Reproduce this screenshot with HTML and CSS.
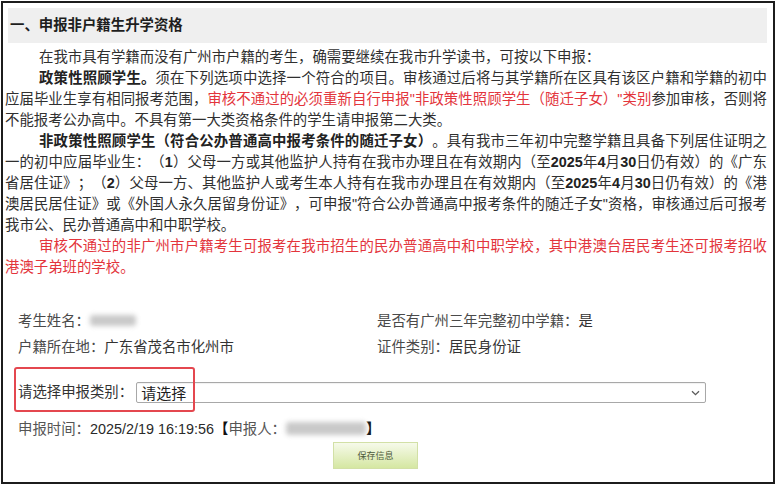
FILE: index.html
```html
<!DOCTYPE html>
<html lang="zh-CN">
<head>
<meta charset="utf-8">
<title>申报非户籍生升学资格</title>
<link rel="stylesheet" href="styles.css">
</head>
<body>
<div class="frame">
  <h2 class="section-title">一、申报非户籍生升学资格</h2>
  <div class="notice">
    <p>在我市具有学籍而没有广州市户籍的考生，确需要继续在我市升学读书，可按以下申报：</p>
    <p><b>政策性照顾学生。</b>须在下列选项中选择一个符合的项目。审核通过后将与其学籍所在区具有该区户籍和学籍的初中应届毕业生享有相同报考范围，<span class="red">审核不通过的必须重新自行申报"非政策性照顾学生（随迁子女）"类别</span>参加审核，否则将不能报考公办高中。不具有第一大类资格条件的学生请申报第二大类。</p>
    <p><b>非政策性照顾学生（符合公办普通高中报考条件的随迁子女）</b>。具有我市三年初中完整学籍且具备下列居住证明之一的初中应届毕业生：（<b class="num">1</b>）父母一方或其他监护人持有在我市办理且在有效期内（至<b class="num">2025</b>年<b class="num">4</b>月<b class="num">30</b>日仍有效）的《广东省居住证》；（<b class="num">2</b>）父母一方、其他监护人或考生本人持有在我市办理且在有效期内（至<b class="num">2025</b>年<b class="num">4</b>月<b class="num">30</b>日仍有效）的《港澳居民居住证》或《外国人永久居留身份证》，可申报"符合公办普通高中报考条件的随迁子女"资格，审核通过后可报考我市公、民办普通高中和中职学校。</p>
    <p class="red">审核不通过的非广州市户籍考生可报考在我市招生的民办普通高中和中职学校，其中港澳台居民考生还可报考招收港澳子弟班的学校。</p>
  </div>

  <div class="info">
    <div class="field">考生姓名：<span class="blur blur-name"></span></div>
    <div class="field">是否有广州三年完整初中学籍：<span class="value">是</span></div>
    <div class="field">户籍所在地：<span class="value">广东省茂名市化州市</span></div>
    <div class="field">证件类别：<span class="value">居民身份证</span></div>
  </div>

  <div class="select-row">
    <label class="select-label">请选择申报类别：</label>
    <div class="select">
      <span>请选择</span>
      <svg class="chevron" width="9" height="6" viewBox="0 0 9 6"><path d="M1 1.2 L4.5 4.6 L8 1.2" fill="none" stroke="#5a5a5a" stroke-width="1.3"/></svg>
    </div>
    <div class="highlight"></div>
  </div>

  <div class="time-row">申报时间：<span class="time">2025/2/19 16:19:56</span><b class="bracket">【</b>申报人：<span class="blur blur-id"></span><b class="bracket">】</b></div>

  <button class="save" type="button">保存信息</button>
</div>
</body>
</html>
```

FILE: styles.css
```css
html, body {
  margin: 0;
  background: #ffffff;
}

body {
  font-family: "Liberation Sans", "Noto Sans CJK SC", sans-serif;
  color: #333333;
}

.frame {
  box-sizing: border-box;
  width: 774px;
  height: 483px;
  margin: 1px 0 0 1px;
  border: 2px solid #1c1c1c;
  padding-top: 5px;
}

.section-title {
  margin: 0 6px 0 5px;
  height: 35px;
  line-height: 35px;
  padding-left: 2px;
  background: #efefef;
  font-size: 14.4px;
  font-weight: bold;
  color: #1e1e1e;
}

.notice {
  margin: 4px 6px 0 2px;
  font-size: 14.4px;
  line-height: 21px;
  text-align: justify;
  text-spacing-trim: space-all;
  color: #303030;
}

.notice p {
  margin: 0;
  text-indent: 34px;
}

.notice b {
  font-weight: bold;
  color: #222222;
}

.red,
.notice .red {
  color: #e3353c;
}

.info {
  display: grid;
  grid-template-columns: 359px 1fr;
  margin-top: 30px;
  padding-left: 15px;
  font-size: 14.4px;
  line-height: 26px;
  color: #4a4a4a;
}

.value {
  color: #333333;
}

.blur {
  display: inline-block;
  vertical-align: middle;
  background: #c9c9c9;
  filter: blur(2.5px);
  border-radius: 3px;
}

.blur-name {
  width: 46px;
  height: 11px;
  margin-top: -3px;
}

.select-row {
  position: relative;
  display: flex;
  align-items: center;
  gap: 3px;
  padding: 22px 0 0 15px;
  font-size: 14.4px;
}

.select-label {
  line-height: 21px;
  color: #333333;
}

.select {
  box-sizing: border-box;
  width: 570px;
  height: 21px;
  display: flex;
  align-items: center;
  justify-content: space-between;
  padding: 0 5px 0 4px;
  border: 1px solid #a8a8a8;
  border-radius: 2px;
  background: #ffffff;
  font-family: "Noto Sans CJK SC", sans-serif;
  font-size: 15px;
  color: #1e1e1e;
  box-shadow: inset 0 1px 1px rgba(0, 0, 0, 0.06);
}

.chevron {
  display: block;
}

.highlight {
  position: absolute;
  left: 11px;
  top: 7px;
  width: 181px;
  height: 45px;
  box-sizing: border-box;
  border: 2px solid #e4474f;
  border-radius: 3px;
}

.time-row {
  margin-top: 13px;
  padding-left: 15px;
  font-size: 14.4px;
  line-height: 26px;
  color: #555555;
}

.time {
  color: #2a2a2a;
}

.bracket {
  color: #111111;
}

.blur-id {
  width: 80px;
  height: 13px;
  margin-top: -3px;
}

.save {
  display: block;
  margin-left: 330px;
  width: 85px;
  height: 27px;
  padding: 0;
  border: 1px solid #d2e0a6;
  background: linear-gradient(#f6faea, #d5e7a2);
  font-family: "Noto Sans CJK SC", sans-serif;
  font-size: 9px;
  color: #4e5b3c;
}
```
